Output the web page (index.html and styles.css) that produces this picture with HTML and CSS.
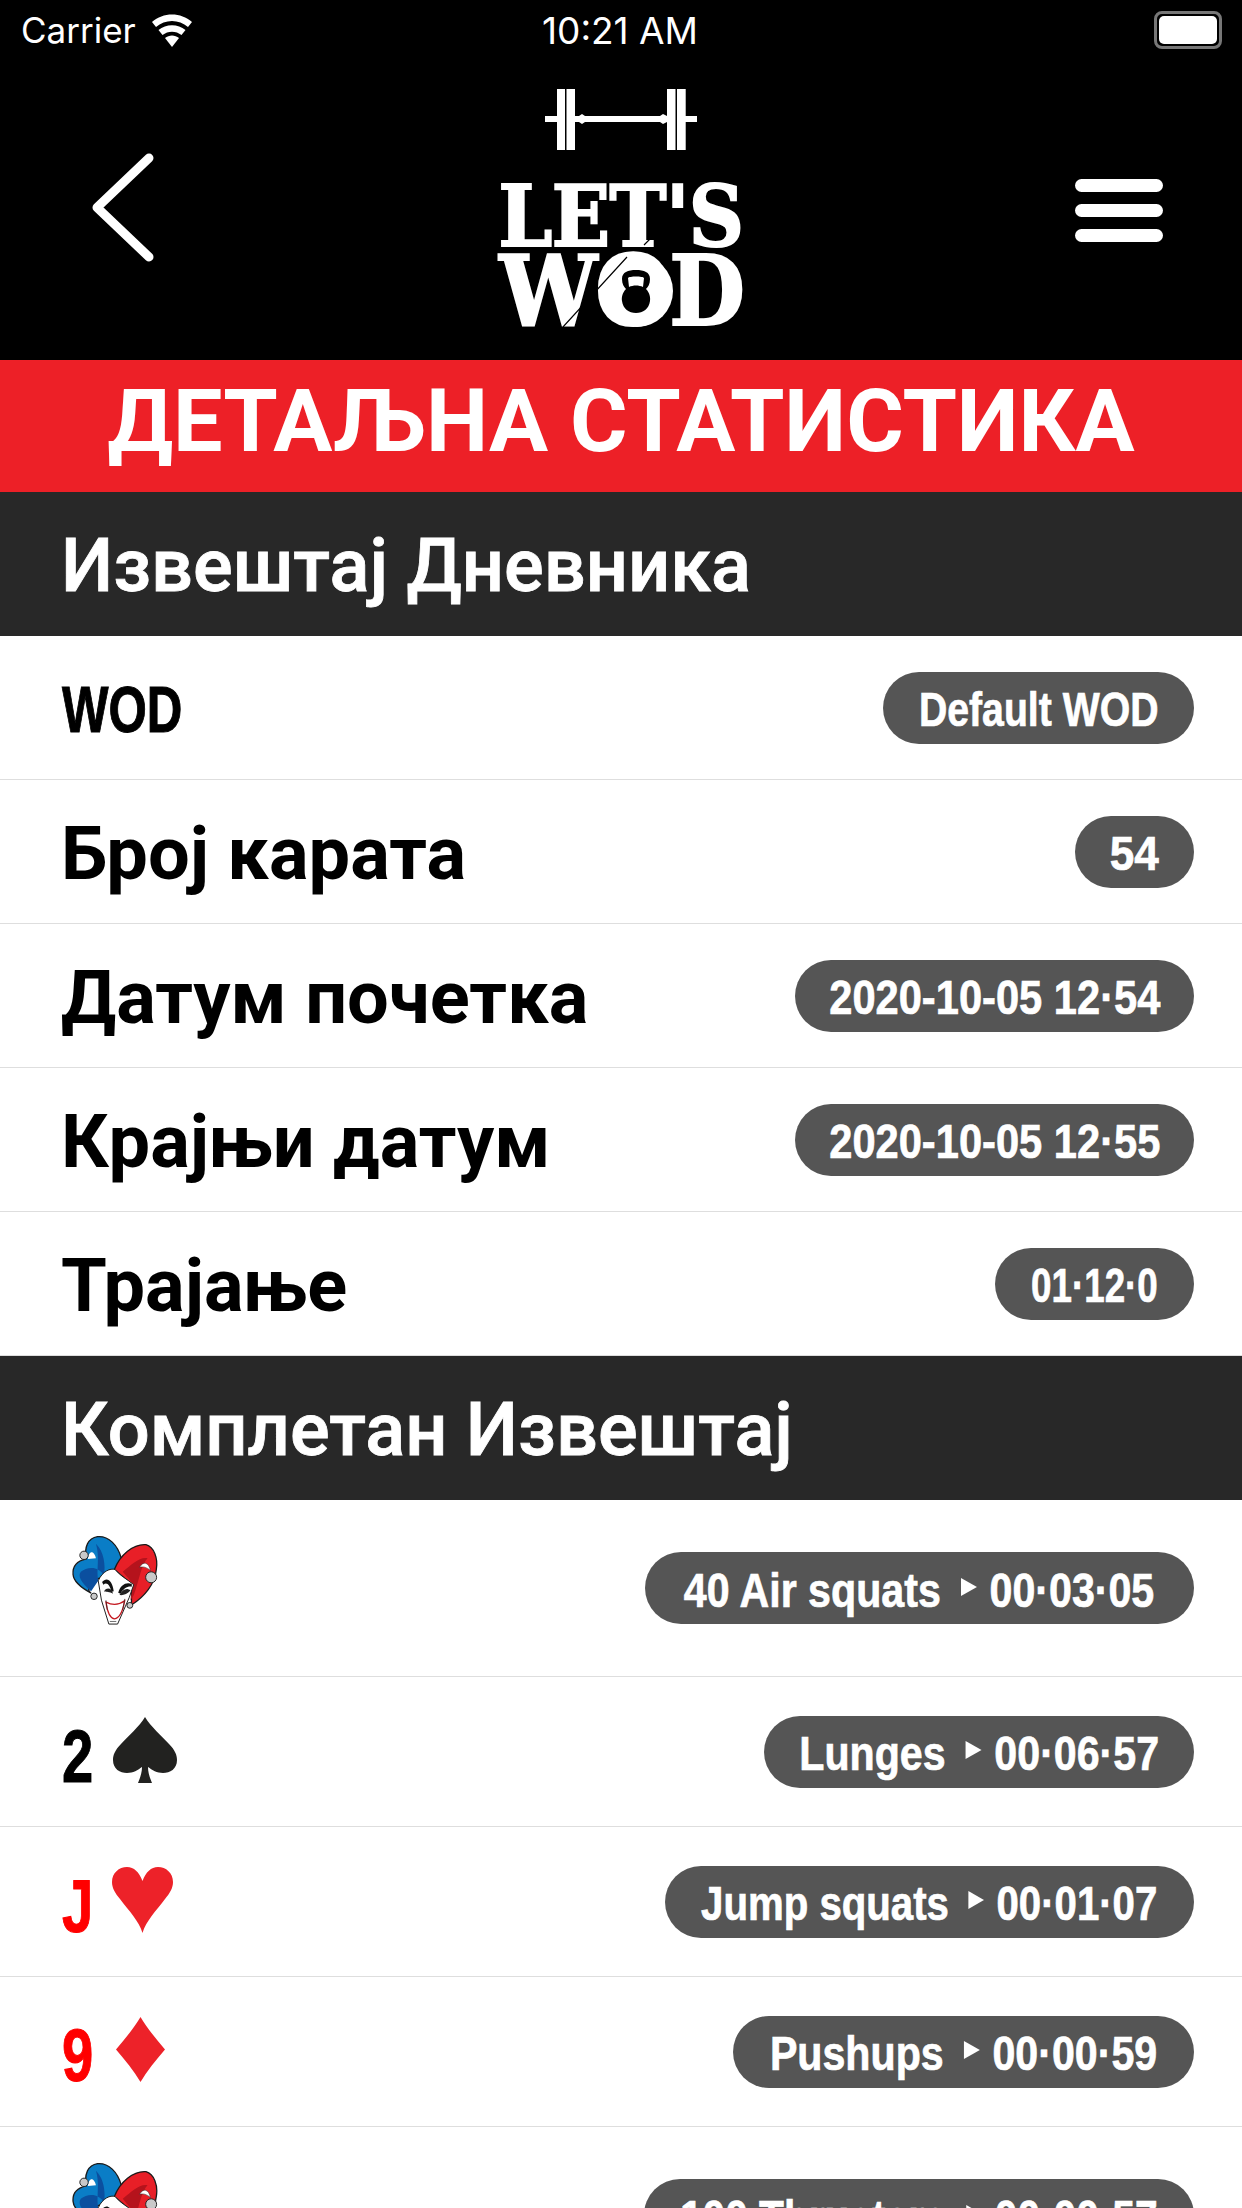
FILE: index.html
```html
<!DOCTYPE html>
<html>
	<head>
		<meta charset="UTF-8"/>
		<meta name="viewport" content="width=device-width, initial-scale=1.0"/>
		<title>Let's WOD | Детаљна статистика</title>
		<link rel="stylesheet" href="styles.css">
	</head>
	<body>
		<svg class="defs" width="0" height="0">
			<symbol id="jester" viewBox="88 98 272 282">
				<path d="M205 225C170 225 125 262 150 278C120 262 96 245 94 220C92 195 108 178 135 172C128 135 140 108 170 103C205 100 232 130 243 168L225 215Z" fill="#0a7dc6" stroke="#1a1a1a" stroke-width="4"/>
				<path d="M190 225C175 195 140 195 118 212C108 225 118 245 150 272L172 240C165 205 178 170 165 125C190 150 195 190 190 225Z" fill="#0b4f9f"/>
				<path d="M222 205C240 160 280 125 320 128C345 135 358 170 352 205C348 250 315 290 275 315L275 250Z" fill="#e81f27" stroke="#1a1a1a" stroke-width="4"/>
				<path d="M248 212C275 190 300 165 325 170C305 190 300 235 282 285L272 300L280 250Z" fill="#b5131c"/>
				<path d="M300 198C312 178 328 182 334 208C322 198 312 195 300 198Z" fill="#fff" stroke="#222" stroke-width="1.500"/>
				<path d="M140 172C142 148 158 142 165 170Z" fill="#fff"/>
				<path d="M172 240C185 210 210 200 224 205C240 225 262 235 282 252L268 292L232 374H205L182 300Z" fill="#fff" stroke="#1a1a1a" stroke-width="3"/>
				<path d="M184 244C198 226 216 238 220 272L213 274C208 252 198 242 188 252ZM276 250C260 242 240 252 234 277L241 280C250 264 262 256 276 258Z" fill="#111"/>
				<path d="M190 272C200 258 214 264 218 280C206 272 198 276 190 272ZM238 284C246 266 262 260 272 270C262 280 250 286 238 284Z" fill="#222"/>
				<path d="M196 306C215 316 235 316 254 302C248 335 236 356 222 358C208 355 200 335 196 306Z" fill="#fff" stroke="#c3161e" stroke-width="4"/>
				<path d="M196 300L200 330M254 296L248 330M208 366H228" stroke="#222" stroke-width="2"/>
				<circle cx="128" cy="161" r="13" fill="#c9c9c9" stroke="#222" stroke-width="3"/>
				<circle cx="336" cy="229" r="17" fill="#c9c9c9" stroke="#222" stroke-width="3"/>
				<circle cx="159" cy="288" r="10" fill="#c9c9c9" stroke="#222" stroke-width="3"/>
				<circle cx="270" cy="316" r="9" fill="#c9c9c9" stroke="#222" stroke-width="3"/>
			</symbol>
			<symbol id="spade" viewBox="0 0 64 66">
				<path d="M32 0C26 10 16 18 8 27C2 33 0 38 0 43C0 52 7 56 14 56C20 56 25 53 29 50C29 56 27 61 25 66H39C37 61 35 56 35 50C39 53 44 56 50 56C57 56 64 52 64 43C64 38 62 33 56 27C48 18 38 10 32 0Z" fill="#222220"/>
			</symbol>
			<symbol id="heart" viewBox="0 0 61 66">
				<path d="M30.500 66C27 54 17 44 8 32C3 26 0 21 0 15C0 6 7 0 15 0C22 0 27 5 30.500 14C34 5 39 0 46 0C54 0 61 6 61 15C61 21 58 26 53 32C44 44 34 54 30.500 66Z" fill="#ed2229"/>
			</symbol>
			<symbol id="diamond" viewBox="0 0 49 65">
				<path d="M24.500 0C31 11 40 22 49 32.500C40 43 31 54 24.500 65C18 54 9 43 0 32.500C9 22 18 11 24.500 0Z" fill="#ed2229"/>
			</symbol>
		</svg>

		<header class="topbar">
			<div class="status">
				<div class="status-left">
					<span>Carrier</span>
					<svg class="wifi" viewBox="0 0 44 33">
						<path d="M22 33L15 24C19 20.500 25 20.500 29 24Z" fill="#fff"/>
						<path d="M12.500 21L8.500 16C16 9.500 28 9.500 35.500 16L31.500 21C26 16.500 18 16.500 12.500 21Z" fill="#fff"/>
						<path d="M6 13L2 8C13 -2 31 -2 42 8L38 13C29 5 15 5 6 13Z" fill="#fff"/>
					</svg>
				</div>
				<span class="clock">10:21 AM</span>
				<div class="battery"><span class="battery-fill"></span></div>
			</div>
			<nav class="nav">
				<svg class="back" viewBox="0 0 62 109">
					<path d="M57 5L5 54.500L57 104" fill="none" stroke="#fff" stroke-width="9" stroke-linecap="round" stroke-linejoin="round"/>
				</svg>
				<div class="logo">
					<svg class="barbell" viewBox="0 0 152 61">
						<path d="M12 0H20V61H12ZM21.500 0H30V61H21.500ZM122 0H130.500V61H122ZM132 0H140.700V61H132Z" fill="#fff"/>
						<path d="M0 27H12V33H0ZM30 27H34L37 25L40 27H115L118 25L122 27V33L118 35L115 33H40L37 35L34 33H30ZM140 27H152V33H140Z" fill="#fff"/>
					</svg>
					<div class="logo-lets">LET'S</div>
					<div class="logo-wod">WOD</div>
					<svg class="kettlebell" viewBox="0 0 243 142">
						<ellipse cx="137" cy="106" rx="36" ry="36" fill="#fff"/>
						<path d="M136 85C128 85 122 87 122 94C122 99 124 102 126 104C122 108 121.500 113 122 116C123 124 129 128 136 128C143 128 149 124 150 116C150.500 113 150 108 146 104C148 102 150 99 150 94C150 87 144 85 136 85Z" fill="#000"/>
						<path d="M128 93C129 91 143 91 144 93L143 102C139 100 133 100 129 102Z" fill="#fff"/>
						<path d="M63 142L127 72M144 60L153 51" stroke="#000" stroke-width="1.200"/>
					</svg>
				</div>
				<svg class="menu" viewBox="0 0 88 63">
					<rect width="88" height="13" rx="6.500" fill="#fff"/>
					<rect y="25" width="88" height="13" rx="6.500" fill="#fff"/>
					<rect y="50" width="88" height="13" rx="6.500" fill="#fff"/>
				</svg>
			</nav>
		</header>

		<h1 class="title">ДЕТАЉНА СТАТИСТИКА</h1>

		<h2 class="section">Извештај Дневника</h2>
		<div class="row">
			<span class="label-narrow">WOD</span>
			<span class="pill pill-default"><span class="pill-text">Default WOD</span></span>
		</div>
		<div class="row">
			<span class="label">Број карата</span>
			<span class="pill pill-count"><span class="pill-text">54</span></span>
		</div>
		<div class="row">
			<span class="label">Датум почетка</span>
			<span class="pill pill-date"><span class="pill-text">2020-10-05 12·54</span></span>
		</div>
		<div class="row">
			<span class="label">Крајњи датум</span>
			<span class="pill pill-date"><span class="pill-text">2020-10-05 12·55</span></span>
		</div>
		<div class="row">
			<span class="label">Трајање</span>
			<span class="pill pill-dur"><span class="pill-text">01·12·0</span></span>
		</div>

		<h2 class="section">Комплетан Извештај</h2>
		<div class="row row-card row-first">
			<svg class="joker"><use href="#jester"/></svg>
			<span class="pill pill-air"><span class="pill-text">40 Air squats<i class="arrow"></i>00·03·05</span></span>
		</div>
		<div class="row row-card">
			<div class="card"><span class="rank">2</span><svg class="suit suit-spade"><use href="#spade"/></svg></div>
			<span class="pill pill-lunges"><span class="pill-text">Lunges<i class="arrow"></i>00·06·57</span></span>
		</div>
		<div class="row row-card">
			<div class="card red"><span class="rank">J</span><svg class="suit suit-heart"><use href="#heart"/></svg></div>
			<span class="pill pill-jump"><span class="pill-text">Jump squats<i class="arrow"></i>00·01·07</span></span>
		</div>
		<div class="row row-card">
			<div class="card red"><span class="rank">9</span><svg class="suit suit-diamond"><use href="#diamond"/></svg></div>
			<span class="pill pill-push"><span class="pill-text">Pushups<i class="arrow"></i>00·00·59</span></span>
		</div>
		<div class="row row-card row-first">
			<svg class="joker"><use href="#jester"/></svg>
			<span class="pill pill-thrust"><span class="pill-text">100 Thrusters<i class="arrow"></i>00·00·57</span></span>
		</div>
	</body>
</html>
```

FILE: styles.css
```css
html, body {
	margin: 0;
	padding: 0;
	height: 2208px;
	overflow: hidden;
	background: #fff;
	font-family: Roboto, sans-serif;
	color: #000;
}

.defs {
	position: absolute;
}

.topbar {
	background: #000;
	color: #fff;
	height: 360px;
}

.status {
	height: 60px;
	display: grid;
	grid-template-columns: 1fr auto 1fr;
	align-items: center;
	padding: 0 20px 0 21px;
	font-family: Inter, sans-serif;
	font-size: 35px;
}

.clock {
	font-size: 37px;
	margin-left: -3px;
}

.status-left {
	display: flex;
	align-items: center;
	gap: 14px;
}

.wifi {
	width: 44px;
	height: 33px;
}

.battery {
	justify-self: end;
	width: 58px;
	height: 28px;
	border: 3px solid #777;
	border-radius: 8px;
	padding: 2px;
	display: flex;
}

.battery-fill {
	flex: 1;
	background: #fff;
	border-radius: 5px;
}

.nav {
	height: 300px;
	display: grid;
	grid-template-columns: 1fr auto 1fr;
	align-items: center;
	padding: 0 79px;
}

.back {
	width: 62px;
	height: 109px;
	margin-left: 13px;
	margin-bottom: 6px;
}

.menu {
	justify-self: end;
	width: 88px;
	height: 63px;
}

.logo {
	position: relative;
	width: 243px;
	display: flex;
	flex-direction: column;
	align-items: center;
	margin-bottom: 4px;
}

.barbell {
	width: 152px;
	height: 61px;
	margin-bottom: 35px;
}

.logo-lets, .logo-wod {
	font-family: "DejaVu Serif Condensed", "DejaVu Serif", serif;
	font-weight: bold;
	white-space: nowrap;
	-webkit-text-stroke: 2px #fff;
}

.logo-lets {
	font-size: 85px;
	line-height: 62px;
	height: 62px;
	letter-spacing: -0.5px;
}

.logo-wod {
	font-size: 97px;
	line-height: 72px;
	height: 72px;
	margin-top: 8px;
	letter-spacing: -2px;
}

.kettlebell {
	position: absolute;
	left: 0;
	bottom: 0;
	width: 243px;
	height: 142px;
}

.title {
	margin: 0;
	height: 132px;
	background: #ed2027;
	color: #fff;
	font-size: 88px;
	font-weight: 700;
	line-height: 122px;
	text-align: center;
}

.section {
	margin: 0;
	height: 144px;
	background: #282828;
	color: #fff;
	font-size: 74px;
	font-weight: 500;
	line-height: 148px;
	padding-left: 61px;
	-webkit-text-stroke: 0.8px #fff;
}

.row {
	display: flex;
	justify-content: space-between;
	align-items: center;
	height: 144px;
	padding: 0 48px 0 62px;
	border-bottom: 1px solid #dedede;
	box-sizing: border-box;
}

.row-card {
	height: 150px;
}

.row-first {
	height: 177px;
}

.label {
	font-size: 74px;
	font-weight: 700;
	margin-left: -1px;
	margin-top: 3px;
}

.label-narrow, .rank, .pill-text {
	font-family: "Liberation Sans", sans-serif;
	font-weight: 700;
}

.label-narrow {
	display: block;
	width: 119px;
	font-size: 64px;
	white-space: nowrap;
	transform: scaleX(0.77);
	transform-origin: left center;
	margin-top: 4px;
	-webkit-text-stroke: 1px #000;
}

.pill {
	display: flex;
	justify-content: center;
	align-items: center;
	flex-shrink: 0;
	height: 72px;
	background: #555;
	border-radius: 36px;
}

.pill-text {
	flex-shrink: 0;
	display: flex;
	align-items: center;
	margin-top: 3px;
	color: #fff;
	font-size: 49px;
	white-space: nowrap;
	transform: scaleX(var(--squeeze));
	-webkit-text-stroke: 0.7px #fff;
}

.pill-default { width: 311px; --squeeze: 0.8; }
.pill-count { width: 119px; --squeeze: 0.9; }
.pill-date { width: 399px; --squeeze: 0.85; }
.pill-dur { width: 199px; --squeeze: 0.75; }
.pill-air { width: 549px; --squeeze: 0.84; }
.pill-lunges { width: 430px; --squeeze: 0.84; }
.pill-jump { width: 529px; --squeeze: 0.82; }
.pill-push { width: 461px; --squeeze: 0.84; }
.pill-thrust { width: 550px; --squeeze: 0.83; }

.arrow {
	width: 0;
	height: 0;
	margin: 0 15px 6px 24px;
	border-left: 19px solid #fff;
	border-top: 9px solid transparent;
	border-bottom: 9px solid transparent;
}

.joker {
	width: 88px;
	height: 91px;
	margin-left: 9px;
	margin-bottom: 16px;
}

.card {
	display: flex;
	align-items: flex-end;
	margin-bottom: 4px;
}

.red {
	color: #f00;
}

.rank {
	display: block;
	width: 31px;
	font-size: 74px;
	line-height: 53px;
	height: 53px;
	transform: scaleX(0.76);
	transform-origin: left center;
	-webkit-text-stroke: 1px currentColor;
}

.suit-spade {
	width: 64px;
	height: 66px;
	margin-left: 20px;
}

.suit-heart {
	width: 61px;
	height: 66px;
	margin-left: 19px;
}

.suit-diamond {
	width: 49px;
	height: 65px;
	margin-left: 23px;
}
```
